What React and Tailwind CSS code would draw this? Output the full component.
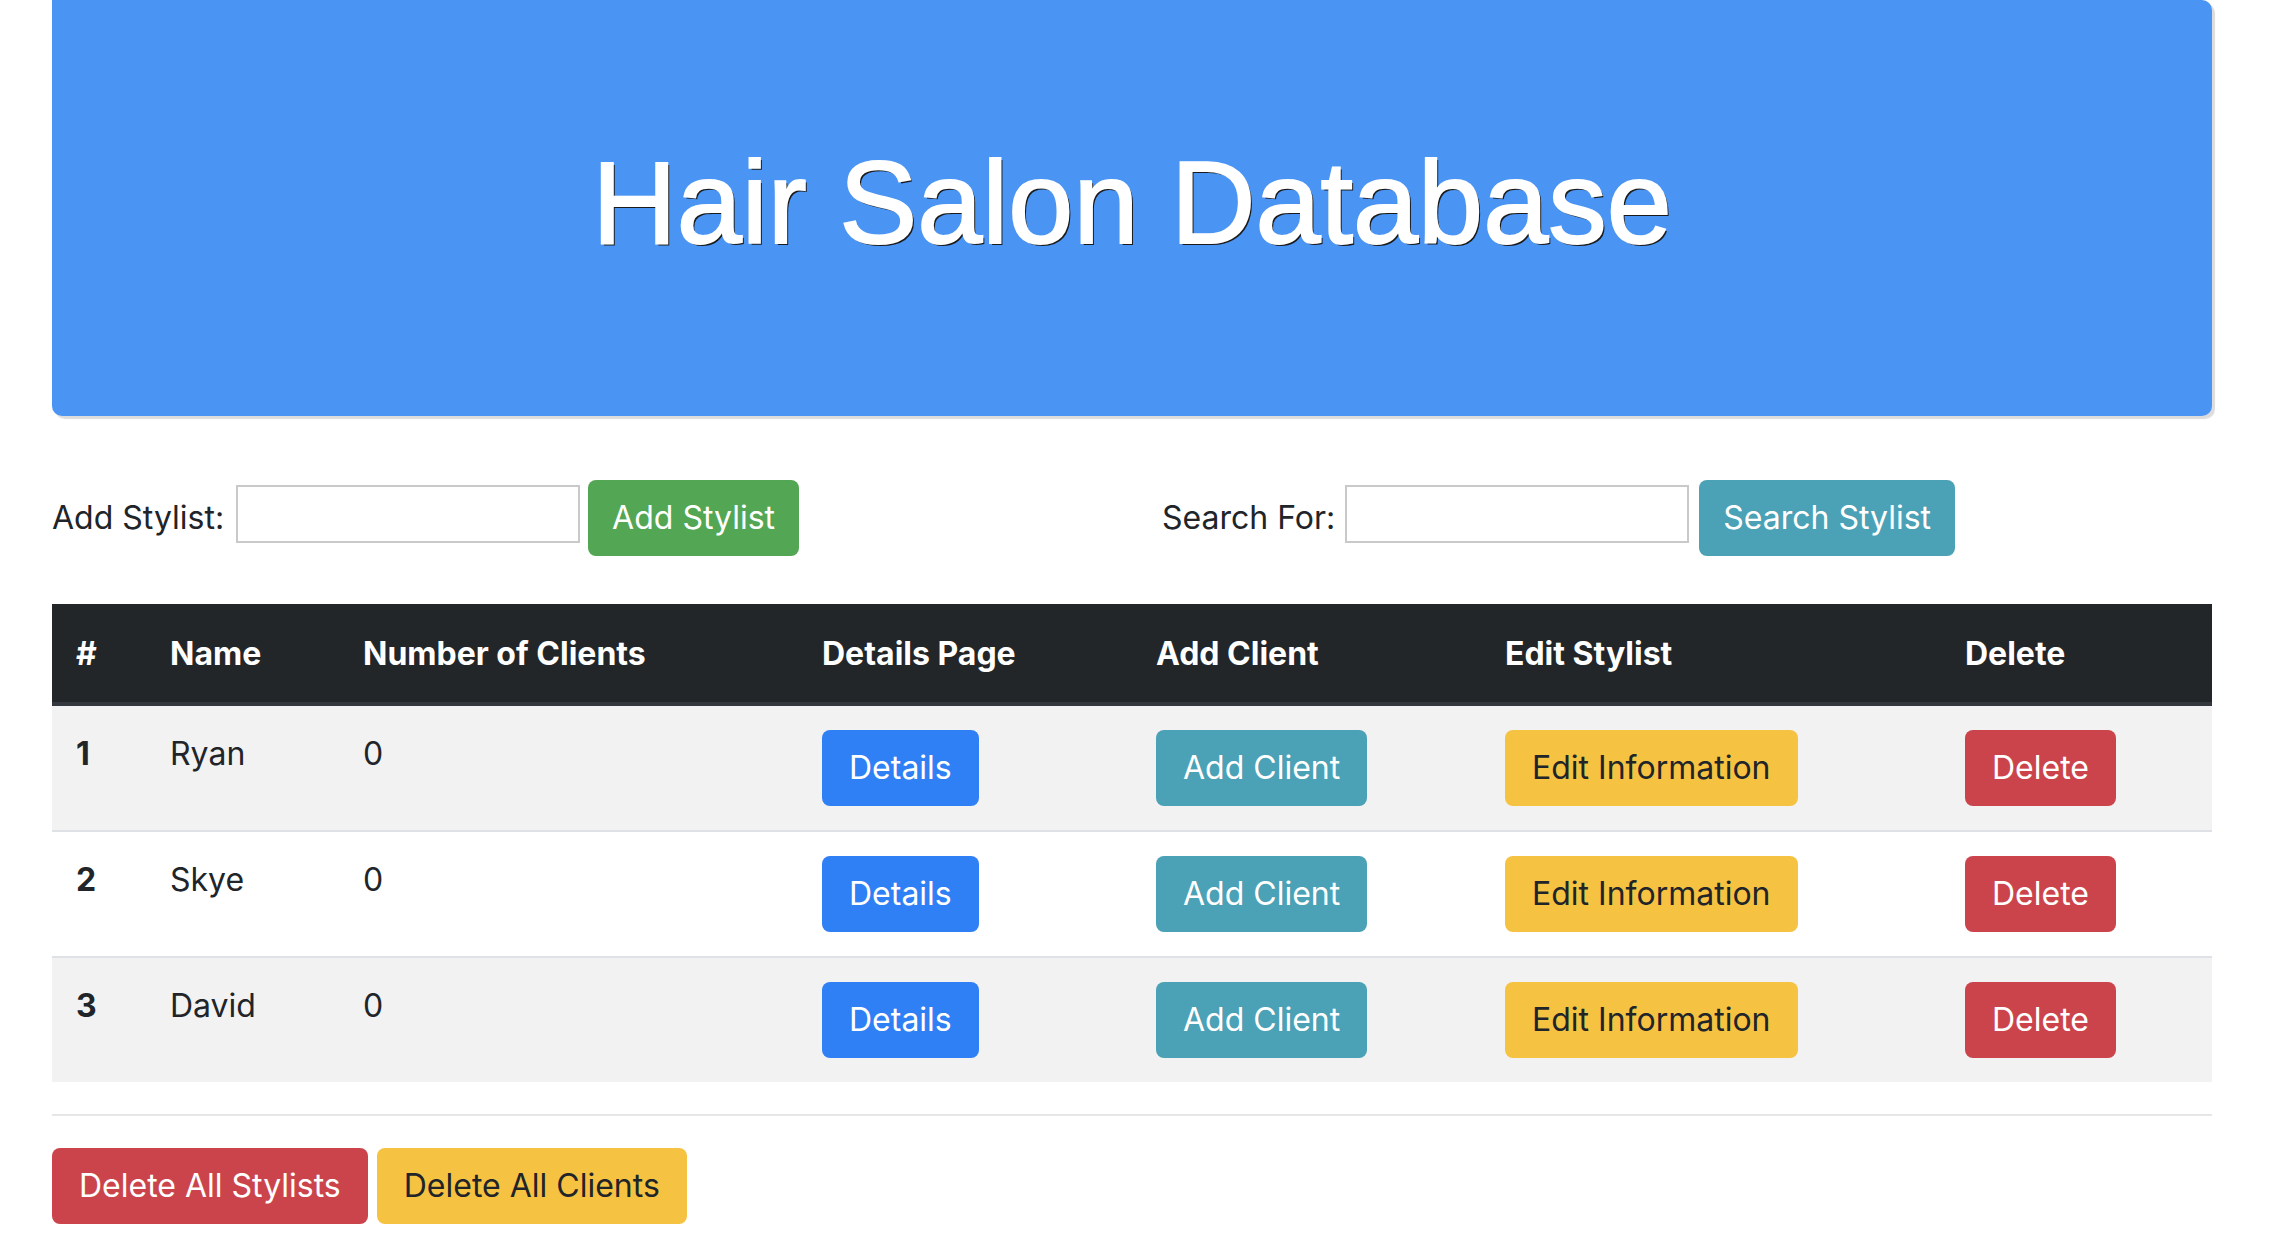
import React from 'react';

const stylists = [
  { id: 1, name: 'Ryan', clients: 0 },
  { id: 2, name: 'Skye', clients: 0 },
  { id: 3, name: 'David', clients: 0 },
];

const btn = 'inline-flex items-center justify-center h-[76px] px-[27px] rounded-[8px] text-[32px] leading-[48px] whitespace-nowrap';
const formBtn = 'inline-flex items-center justify-center h-[76px] px-[24px] rounded-[8px] text-[32px] leading-[48px] whitespace-nowrap';

const App = () => {
  return (
    <div className="min-h-screen bg-white text-[#212529] font-['Inter','Liberation_Sans',sans-serif] text-[32px] leading-[48px]">
      <div className="w-[2160px] ml-[52px]">
        {/* Jumbotron */}
        <div className="h-[416px] bg-[#4a94f4] rounded-b-[10px] rounded-tr-[10px] shadow-[3px_3px_1px_#dcdcdc] flex items-center justify-center pb-[12px]">
          <h1 className="text-white font-['Liberation_Sans','Arial',sans-serif] text-[117px] leading-none [-webkit-text-stroke:2px_white] [text-shadow:2px_2px_0_#1a1a1a]">
            Hair Salon Database
          </h1>
        </div>

        {/* Forms */}
        <div className="flex items-center mt-[64px] mb-[48px]">
          <div className="w-[1110px] flex items-center">
            <label className="mr-[12px]">Add Stylist:</label>
            <input type="text" className="w-[344px] h-[58px] mb-[8px] border-2 border-[#c9c9c9] outline-none px-2" />
            <button className={`${formBtn} ml-[8px] bg-[#53a653] text-white`}>Add Stylist</button>
          </div>
          <div className="flex items-center">
            <label className="mr-[10px]">Search For:</label>
            <input type="text" className="w-[344px] h-[58px] mb-[8px] border-2 border-[#c9c9c9] outline-none px-2" />
            <button className={`${formBtn} ml-[10px] bg-[#4ba1b5] text-white`}>Search Stylist</button>
          </div>
        </div>

        {/* Table */}
        <table className="w-full border-collapse text-left table-fixed">
          <colgroup>
            <col className="w-[94px]" />
            <col className="w-[193px]" />
            <col className="w-[459px]" />
            <col className="w-[334px]" />
            <col className="w-[349px]" />
            <col className="w-[460px]" />
            <col className="w-[271px]" />
          </colgroup>
          <thead>
            <tr className="bg-[#232629] text-white">
              <th className="px-[24px] pt-[26px] pb-[24px] border-b-4 border-[#32383e] font-bold">#</th>
              <th className="px-[24px] pt-[26px] pb-[24px] border-b-4 border-[#32383e] font-bold">Name</th>
              <th className="px-[24px] pt-[26px] pb-[24px] border-b-4 border-[#32383e] font-bold">Number of Clients</th>
              <th className="px-[24px] pt-[26px] pb-[24px] border-b-4 border-[#32383e] font-bold">Details Page</th>
              <th className="px-[24px] pt-[26px] pb-[24px] border-b-4 border-[#32383e] font-bold">Add Client</th>
              <th className="px-[24px] pt-[26px] pb-[24px] border-b-4 border-[#32383e] font-bold">Edit Stylist</th>
              <th className="px-[24px] pt-[26px] pb-[24px] border-b-4 border-[#32383e] font-bold">Delete</th>
            </tr>
          </thead>
          <tbody>
            {stylists.map((s, i) => (
              <tr key={s.id} className={i % 2 === 0 ? 'bg-[#f2f2f2]' : 'bg-white'}>
                <th className={`px-[24px] py-[24px] align-top font-bold ${i > 0 ? 'border-t-2 border-[#dee2e6]' : ''}`}>{s.id}</th>
                <td className={`px-[24px] py-[24px] align-top ${i > 0 ? 'border-t-2 border-[#dee2e6]' : ''}`}>{s.name}</td>
                <td className={`px-[24px] py-[24px] align-top ${i > 0 ? 'border-t-2 border-[#dee2e6]' : ''}`}>{s.clients}</td>
                <td className={`px-[24px] py-[24px] align-top ${i > 0 ? 'border-t-2 border-[#dee2e6]' : ''}`}>
                  <button className={`${btn} bg-[#2f80f5] text-white`}>Details</button>
                </td>
                <td className={`px-[24px] py-[24px] align-top ${i > 0 ? 'border-t-2 border-[#dee2e6]' : ''}`}>
                  <button className={`${btn} bg-[#4ba1b5] text-white`}>Add Client</button>
                </td>
                <td className={`px-[24px] py-[24px] align-top ${i > 0 ? 'border-t-2 border-[#dee2e6]' : ''}`}>
                  <button className={`${btn} bg-[#f6c242] text-[#212529]`}>Edit Information</button>
                </td>
                <td className={`px-[24px] py-[24px] align-top ${i > 0 ? 'border-t-2 border-[#dee2e6]' : ''}`}>
                  <button className={`${btn} bg-[#cc444b] text-white`}>Delete</button>
                </td>
              </tr>
            ))}
          </tbody>
        </table>

        <hr className="mt-[32px] mb-[32px] border-t-2 border-[#e6e6e6]" />

        <div className="flex gap-[9px]">
          <button className={`${btn} bg-[#cc444b] text-white`}>Delete All Stylists</button>
          <button className={`${btn} bg-[#f6c242] text-[#212529]`}>Delete All Clients</button>
        </div>
      </div>
    </div>
  );
};

export default App;
